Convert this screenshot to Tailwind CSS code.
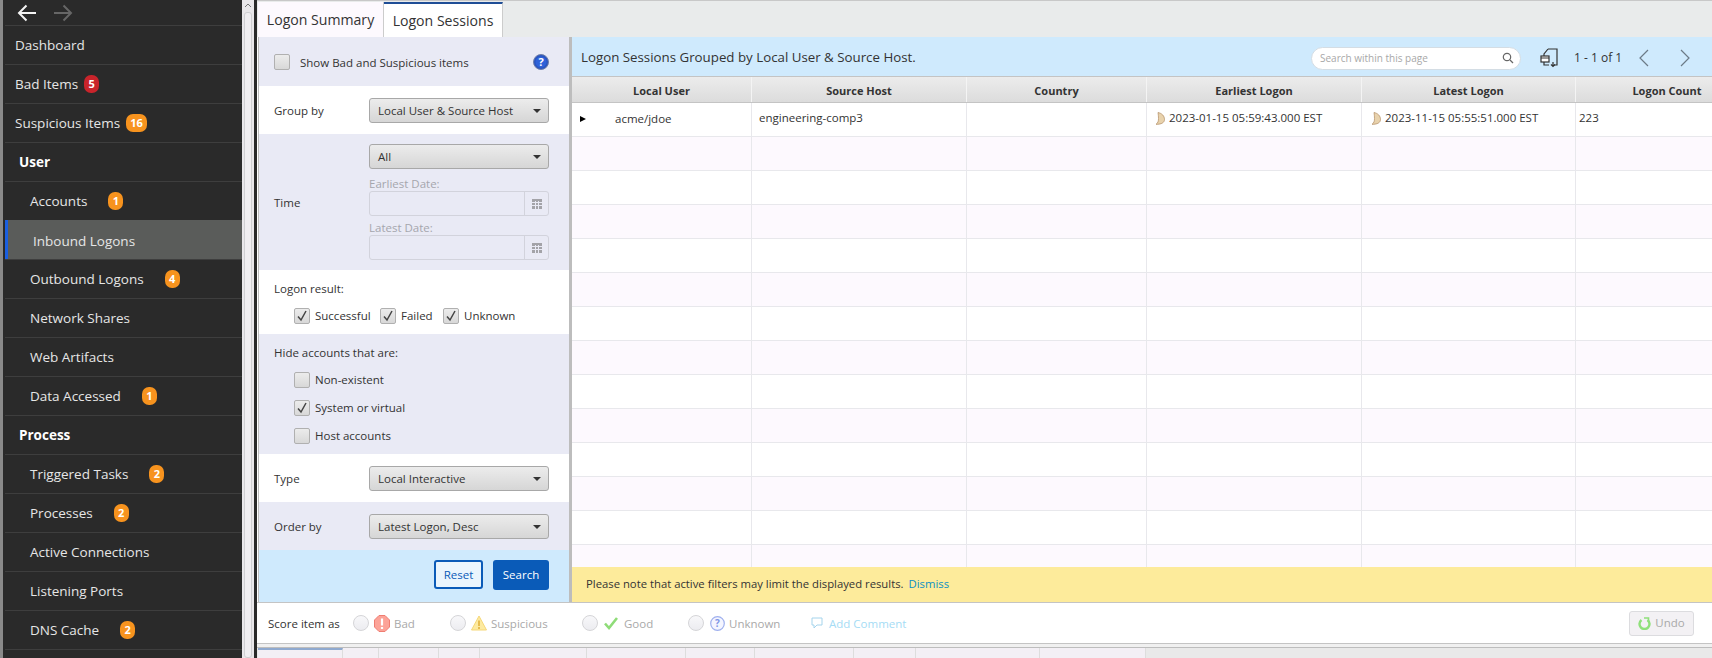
<!DOCTYPE html>
<html lang="en">
<head>
  <meta charset="UTF-8" />
  <title>Logon Sessions</title>
  <script src="https://cdn.jsdelivr.net/npm/@tailwindcss/browser@4"></script>
</head>
<body class="bg-white overflow-hidden font-['Open_Sans',sans-serif] text-[11.5px] text-[#333]">
<div class="flex h-[658px] w-[1712px] overflow-hidden">
  <!-- Sidebar -->
  <div class="w-[3px] bg-[#8a8a8a]"></div>
  <nav class="w-[239px] bg-[#2a2a2a] text-[13.5px] text-[#e6e6e6] pl-[2px]">
    <div class="h-[25px] flex items-center gap-[16px] pl-[12px]">
      <svg class="w-[20px] h-[18px]" viewBox="0 0 20 18" fill="none" stroke="#f4f4f4" stroke-width="2"><path d="M19 9H2M9.500 1.500L2 9l7.500 7.500"/></svg>
      <svg class="w-[20px] h-[18px]" viewBox="0 0 20 18" fill="none" stroke="#666" stroke-width="2"><path d="M1 9h17M10.500 1.500L18 9l-7.500 7.500"/></svg>
    </div>
    <div class="h-[39px] border-t border-[#3e3e3e] flex items-center pl-[10px]">Dashboard</div>
    <div class="h-[39px] border-t border-[#3e3e3e] flex items-center pl-[10px]">Bad Items<span class="ml-[6px] w-[15px] h-[18px] rounded-[7px] bg-[#c9242b] text-white font-bold text-[11px] flex items-center justify-center">5</span></div>
    <div class="h-[39px] border-t border-[#3e3e3e] flex items-center pl-[10px]">Suspicious Items<span class="ml-[6px] w-[21px] h-[18px] rounded-[7px] bg-[#f7931e] text-white font-bold text-[11px] flex items-center justify-center">16</span></div>
    <div class="h-[39px] border-t border-[#3e3e3e] flex items-center pl-[14px] font-bold text-white">User</div>
    <div class="h-[39px] border-t border-[#3e3e3e] flex items-center pl-[25px]">Accounts<span class="ml-[21px] w-[15px] h-[18px] rounded-[7px] bg-[#f7931e] text-white font-bold text-[11px] flex items-center justify-center">1</span></div>
    <div class="h-[39px] border-l-[3px] border-[#1a5fe0] bg-[#5a5c5a] flex items-center pt-[4px] pl-[25px]">Inbound Logons</div>
    <div class="h-[39px] border-t border-[#3e3e3e] flex items-center pl-[25px]">Outbound Logons<span class="ml-[21px] w-[15px] h-[18px] rounded-[7px] bg-[#f7931e] text-white font-bold text-[11px] flex items-center justify-center">4</span></div>
    <div class="h-[39px] border-t border-[#3e3e3e] flex items-center pl-[25px]">Network Shares</div>
    <div class="h-[39px] border-t border-[#3e3e3e] flex items-center pl-[25px]">Web Artifacts</div>
    <div class="h-[39px] border-t border-[#3e3e3e] flex items-center pl-[25px]">Data Accessed<span class="ml-[21px] w-[15px] h-[18px] rounded-[7px] bg-[#f7931e] text-white font-bold text-[11px] flex items-center justify-center">1</span></div>
    <div class="h-[39px] border-t border-[#3e3e3e] flex items-center pl-[14px] font-bold text-white">Process</div>
    <div class="h-[39px] border-t border-[#3e3e3e] flex items-center pl-[25px]">Triggered Tasks<span class="ml-[21px] w-[15px] h-[18px] rounded-[7px] bg-[#f7931e] text-white font-bold text-[11px] flex items-center justify-center">2</span></div>
    <div class="h-[39px] border-t border-[#3e3e3e] flex items-center pl-[25px]">Processes<span class="ml-[21px] w-[15px] h-[18px] rounded-[7px] bg-[#f7931e] text-white font-bold text-[11px] flex items-center justify-center">2</span></div>
    <div class="h-[39px] border-t border-[#3e3e3e] flex items-center pl-[25px]">Active Connections</div>
    <div class="h-[39px] border-t border-[#3e3e3e] flex items-center pl-[25px]">Listening Ports</div>
    <div class="h-[39px] border-t border-[#3e3e3e] flex items-center pl-[25px]">DNS Cache<span class="ml-[21px] w-[15px] h-[18px] rounded-[7px] bg-[#f7931e] text-white font-bold text-[11px] flex items-center justify-center">2</span></div>
    <div class="border-t border-[#3e3e3e]"></div>
  </nav>
  <!-- Sidebar scrollbar -->
  <div class="w-[12px] bg-[#e9e7ea] flex flex-col items-center">
    <svg class="w-[8px] h-[12px]" viewBox="0 0 8 12" fill="none" stroke="#777"><path d="M1 7l3-3 3 3"/></svg>
    <div class="flex-1 w-[8px] bg-[#f0eef1] border border-[#cfcfd2] rounded-[3px]"></div>
  </div>
  <div class="w-[3px] bg-[#2a2a2a]"></div>

  <!-- Main -->
  <div class="flex-1 min-w-0 flex flex-col">
    <!-- Tabs -->
    <div class="h-[37px] bg-[#e9ebeb] flex items-end pl-[1px] border-t border-[#c8c8c8] text-[14.100px]">
      <div class="h-[35px] w-[126px] bg-[#fdf9fe] flex items-center justify-center border-r border-[#ccc]">Logon Summary</div>
      <div class="h-[35px] w-[119px] bg-white border-t-2 border-[#1f4e96] border-r border-r-[#ccc] flex items-center justify-center">Logon Sessions</div>
    </div>

    <!-- Body: filter panel and table -->
    <div class="h-[565px] flex">
      <aside class="w-[314px] ml-[1px] border-l border-r-[3px] border-[#bdbdbd] flex flex-col">
        <div class="h-[49px] bg-[#e9eaf5] flex items-center pl-[15px] pr-[20px]">
          <span class="w-[16px] h-[16px] rounded-[2px] border border-[#b0b0b0] bg-linear-to-b from-[#ececec] to-[#d8d8d8]"></span>
          <span class="ml-[10px] flex-1 pt-[2px]">Show Bad and Suspicious items</span>
          <svg class="w-[16px] h-[16px]" viewBox="0 0 16 16"><circle cx="8" cy="8" r="7.500" fill="#2a55c0" stroke="#6f7fa8"/><circle cx="8" cy="8" r="5.500" fill="#2f62d8"/><text x="8" y="12" text-anchor="middle" font-size="11" font-weight="700" fill="#fff" font-family="Open Sans">?</text></svg>
        </div>
        <div class="h-[48px] bg-white flex items-center pl-[15px]">
          <span class="w-[95px] pt-[2px]">Group by</span>
          <div class="w-[180px] h-[25px] rounded-[3px] border border-[#a8a8a8] bg-linear-to-b from-[#ececec] to-[#d6d6d6] flex items-center justify-between pl-[8px] pr-[7px] pt-[1px]">Local User &amp; Source Host<span class="w-0 h-0 border-x-[4px] border-x-transparent border-t-[4px] border-t-[#333]"></span></div>
        </div>
        <div class="h-[136px] bg-[#e9eaf5] flex items-center pl-[15px]">
          <span class="w-[95px] pt-[2px]">Time</span>
          <div class="w-[180px] flex flex-col">
            <div class="h-[25px] rounded-[3px] border border-[#a8a8a8] bg-linear-to-b from-[#ececec] to-[#d6d6d6] flex items-center justify-between pl-[8px] pr-[7px] pt-[1px]">All<span class="w-0 h-0 border-x-[4px] border-x-transparent border-t-[4px] border-t-[#333]"></span></div>
            <div class="h-[22px] flex items-end leading-[14px] text-[#a5a6ad]">Earliest Date:</div>
            <div class="h-[25px] rounded-[3px] border border-[#d2d3dc] flex justify-end">
              <span class="w-[24px] border-l border-[#d2d3dc] flex items-center justify-center">
                <svg class="w-[10px] h-[10px]" viewBox="0 0 10 10" fill="#a3a3a8"><path d="M0 0h10v10H0z"/><path stroke="#e9eaf5" d="M0 3.500h10M0 6.500h10M3.500 2v8M6.500 2v8"/></svg>
              </span>
            </div>
            <div class="h-[19px] flex items-end leading-[14px] text-[#a5a6ad]">Latest Date:</div>
            <div class="h-[25px] rounded-[3px] border border-[#d2d3dc] flex justify-end">
              <span class="w-[24px] border-l border-[#d2d3dc] flex items-center justify-center">
                <svg class="w-[10px] h-[10px]" viewBox="0 0 10 10" fill="#a3a3a8"><path d="M0 0h10v10H0z"/><path stroke="#e9eaf5" d="M0 3.500h10M0 6.500h10M3.500 2v8M6.500 2v8"/></svg>
              </span>
            </div>
          </div>
        </div>
        <div class="h-[64px] bg-white pl-[15px] pt-[10px]">
          <div class="h-[18px] flex items-center">Logon result:</div>
          <div class="h-[16px] flex items-center mt-[10px] pl-[20px]">
            <span class="w-[16px] h-[16px] rounded-[2px] border border-[#b0b0b0] bg-linear-to-b from-[#ececec] to-[#d8d8d8] flex items-center justify-center"><svg class="w-[12px] h-[12px]" viewBox="0 0 12 12" fill="none" stroke="#444" stroke-width="1.500"><path d="M2 6.500l3 3.500 5-9"/></svg></span>
            <span class="ml-[5px] w-[65px]">Successful</span>
            <span class="w-[16px] h-[16px] rounded-[2px] border border-[#b0b0b0] bg-linear-to-b from-[#ececec] to-[#d8d8d8] flex items-center justify-center"><svg class="w-[12px] h-[12px]" viewBox="0 0 12 12" fill="none" stroke="#444" stroke-width="1.500"><path d="M2 6.500l3 3.500 5-9"/></svg></span>
            <span class="ml-[5px] w-[42px]">Failed</span>
            <span class="w-[16px] h-[16px] rounded-[2px] border border-[#b0b0b0] bg-linear-to-b from-[#ececec] to-[#d8d8d8] flex items-center justify-center"><svg class="w-[12px] h-[12px]" viewBox="0 0 12 12" fill="none" stroke="#444" stroke-width="1.500"><path d="M2 6.500l3 3.500 5-9"/></svg></span>
            <span class="ml-[5px]">Unknown</span>
          </div>
        </div>
        <div class="h-[120px] bg-[#e9eaf5] pl-[15px] pt-[10px]">
          <div class="h-[18px] flex items-center">Hide accounts that are:</div>
          <div class="h-[16px] flex items-center mt-[10px] pl-[20px]">
            <span class="w-[16px] h-[16px] rounded-[2px] border border-[#b0b0b0] bg-linear-to-b from-[#ececec] to-[#d8d8d8]"></span>
            <span class="ml-[5px]">Non-existent</span>
          </div>
          <div class="h-[16px] flex items-center mt-[12px] pl-[20px]">
            <span class="w-[16px] h-[16px] rounded-[2px] border border-[#b0b0b0] bg-linear-to-b from-[#ececec] to-[#d8d8d8] flex items-center justify-center"><svg class="w-[12px] h-[12px]" viewBox="0 0 12 12" fill="none" stroke="#444" stroke-width="1.500"><path d="M2 6.500l3 3.500 5-9"/></svg></span>
            <span class="ml-[5px]">System or virtual</span>
          </div>
          <div class="h-[16px] flex items-center mt-[12px] pl-[20px]">
            <span class="w-[16px] h-[16px] rounded-[2px] border border-[#b0b0b0] bg-linear-to-b from-[#ececec] to-[#d8d8d8]"></span>
            <span class="ml-[5px]">Host accounts</span>
          </div>
        </div>
        <div class="h-[48px] bg-white flex items-center pl-[15px]">
          <span class="w-[95px] pt-[2px]">Type</span>
          <div class="w-[180px] h-[25px] rounded-[3px] border border-[#a8a8a8] bg-linear-to-b from-[#ececec] to-[#d6d6d6] flex items-center justify-between pl-[8px] pr-[7px] pt-[1px]">Local Interactive<span class="w-0 h-0 border-x-[4px] border-x-transparent border-t-[4px] border-t-[#333]"></span></div>
        </div>
        <div class="h-[48px] bg-[#e9eaf5] flex items-center pl-[15px]">
          <span class="w-[95px] pt-[2px]">Order by</span>
          <div class="w-[180px] h-[25px] rounded-[3px] border border-[#a8a8a8] bg-linear-to-b from-[#ececec] to-[#d6d6d6] flex items-center justify-between pl-[8px] pr-[7px] pt-[1px]">Latest Logon, Desc<span class="w-0 h-0 border-x-[4px] border-x-transparent border-t-[4px] border-t-[#333]"></span></div>
        </div>
        <div class="flex-1 bg-[#cfeafd] flex justify-end items-start pt-[10px] pr-[20px] gap-[10px]">
          <button class="w-[49px] h-[29px] rounded-[3px] border-2 border-[#0a5bb8] bg-[#eaf5fd] text-[#0a5bb8]">Reset</button>
          <button class="w-[56px] h-[30px] rounded-[3px] bg-[#0a5bb8] text-white">Search</button>
        </div>
      </aside>

      <section class="flex-1 min-w-0 flex flex-col">
        <div class="h-[40px] bg-[#cfeafd] flex items-center pl-[9px] pt-[3px] text-[#333] border-b border-[#c4c4c4]">
          <span class="w-[730px] text-[13.300px]">Logon Sessions Grouped by Local User &amp; Source Host.</span>
          <div class="w-[210px] h-[23px] rounded-full bg-white border border-[#d4dde4] flex items-center justify-between pl-[8px] pr-[6px] text-[10px] text-[#a8a8a8]">Search within this page
            <svg class="w-[12px] h-[12px]" viewBox="0 0 12 12" fill="none" stroke="#666" stroke-width="1.200"><circle cx="5" cy="5" r="3.700"/><path d="M8 8l3 3"/></svg>
          </div>
          <svg class="ml-[19px] w-[19px] h-[20px]" viewBox="0 0 19 20" fill="none" stroke="#333" stroke-width="1.200"><path d="M8 1h9v16h-3M8 1L4 6v2M4 14v3h5"/><rect x="1" y="8" width="8" height="6" fill="#fff"/><path d="M1 10h8M13 14v4M11 16.500l2 2 2-2"/></svg>
          <span class="ml-[15px] w-[60px] text-[12px]">1 - 1 of 1</span>
          <svg class="w-[10px] h-[18px] ml-[5px]" viewBox="0 0 10 18" fill="none" stroke="#6c7a86" stroke-width="1.200"><path d="M9 1L1 9l8 8"/></svg>
          <svg class="w-[10px] h-[18px] ml-[31px]" viewBox="0 0 10 18" fill="none" stroke="#6c7a86" stroke-width="1.200"><path d="M1 1l8 8-8 8"/></svg>
        </div>
        <div class="h-[26px] grid grid-cols-[180px_215px_180px_215px_214px_182px] overflow-hidden font-bold text-[11px] text-[#333] border-b border-[#c4c4c4] bg-linear-to-b from-[#ececec] to-[#dcdcdc] text-center">
          <div class="border-r border-[#f4f4f4] flex items-center justify-center pt-[3px]">Local User</div>
          <div class="border-r border-[#f4f4f4] flex items-center justify-center pt-[3px]">Source Host</div>
          <div class="border-r border-[#f4f4f4] flex items-center justify-center pt-[3px]">Country</div>
          <div class="border-r border-[#f4f4f4] flex items-center justify-center pt-[3px]">Earliest Logon</div>
          <div class="border-r border-[#f4f4f4] flex items-center justify-center pt-[3px]">Latest Logon</div>
          <div class="flex items-center justify-center whitespace-nowrap pt-[3px]">Logon Count</div>
        </div>
        <div id="rows" class="flex-1 min-h-0 overflow-hidden">
          <div class="h-[34px] grid grid-cols-[180px_215px_180px_215px_214px_136px] bg-white border-b border-[#e8e8ec] text-[#333]">
            <div class="border-r border-[#e8e8ec] flex items-center pl-[8px] pb-[1px]"><span class="w-0 h-0 border-y-[3.500px] border-y-transparent border-l-[6px] border-l-black"></span><span class="ml-[29px]">acme/jdoe</span></div>
            <div class="border-r border-[#e8e8ec] flex items-center pl-[7px] pb-[3px]">engineering-comp3</div>
            <div class="border-r border-[#e8e8ec]"></div>
            <div class="border-r border-[#e8e8ec] flex items-center pl-[8px] pb-[3px]">
              <svg class="w-[10px] h-[13px] mr-[4px]" viewBox="0 0 10 13"><path d="M3 .5c4 .8 6.500 3.500 6.500 7 0 3-3 5-8.500 4.800C3 11 3.500 9 3.500 6.500 3.500 4.500 3.300 2.500 3 .5z" fill="#e8d2ac" stroke="#b08a60" stroke-width=".7"/></svg>2023-01-15 05:59:43.000 EST
            </div>
            <div class="border-r border-[#e8e8ec] flex items-center pl-[9px] pb-[3px]">
              <svg class="w-[10px] h-[13px] mr-[4px]" viewBox="0 0 10 13"><path d="M3 .5c4 .8 6.500 3.500 6.500 7 0 3-3 5-8.500 4.800C3 11 3.500 9 3.500 6.500 3.500 4.500 3.300 2.500 3 .5z" fill="#e8d2ac" stroke="#b08a60" stroke-width=".7"/></svg>2023-11-15 05:55:51.000 EST
            </div>
            <div class="flex items-center pl-[3px] pb-[3px]">223</div>
          </div>
        </div>
        <div class="h-[35px] bg-[#fdeb9b] flex items-center pl-[14px] text-[11.300px]">Please note that active filters may limit the displayed results.<span class="ml-[5px] text-[#0a8fc4]">Dismiss</span></div>
      </section>
    </div>

    <!-- Score bar -->
    <div class="h-[42px] border-t border-b border-[#c4c4c4] flex items-center pl-[11px] text-[#a9a9a9]">
      <span class="w-[85px] text-[#333] pt-[2px]">Score item as</span>
      <span class="w-[16px] h-[16px] rounded-full border border-[#d5d5d8] bg-linear-to-b from-[#f8f8fa] to-[#ececf0]"></span>
      <svg class="ml-[5px] w-[16px] h-[17px]" viewBox="0 0 16 17"><path d="M5 .5h6L15.500 5v7L11 16.500H5L.5 12V5z" fill="#fca398" stroke="#ef7d72"/><path d="M8 3.500v7M8 12v2" stroke="#fff" stroke-width="2.200"/></svg>
      <span class="ml-[4px] w-[56px] pt-[2px]">Bad</span>
      <span class="w-[16px] h-[16px] rounded-full border border-[#d5d5d8] bg-linear-to-b from-[#f8f8fa] to-[#ececf0]"></span>
      <svg class="ml-[5px] w-[16px] h-[16px]" viewBox="0 0 16 16"><path d="M8 1l7.500 14H.5z" fill="#fdeaa0" stroke="#f5d778"/><path d="M8 5.500v5.500M8 12v2" stroke="#e2b23c" stroke-width="1.600"/></svg>
      <span class="ml-[4px] w-[91px] pt-[2px]">Suspicious</span>
      <span class="w-[16px] h-[16px] rounded-full border border-[#d5d5d8] bg-linear-to-b from-[#f8f8fa] to-[#ececf0]"></span>
      <svg class="ml-[6px] w-[14px] h-[14px]" viewBox="0 0 14 14" fill="none" stroke="#8fdc78" stroke-width="2.600"><path d="M1 7.500l4 4.500 8-10"/></svg>
      <span class="ml-[6px] w-[64px] pt-[2px]">Good</span>
      <span class="w-[16px] h-[16px] rounded-full border border-[#d5d5d8] bg-linear-to-b from-[#f8f8fa] to-[#ececf0]"></span>
      <svg class="ml-[6px] w-[15px] h-[15px]" viewBox="0 0 15 15"><circle cx="7.500" cy="7.500" r="6.800" fill="#f4f5ff" stroke="#9fb0ee" stroke-width="1.200"/><text x="7.500" y="11" text-anchor="middle" font-size="10" font-weight="700" fill="#8095e6" font-family="Open Sans">?</text></svg>
      <span class="ml-[4px] w-[82px] pt-[2px]">Unknown</span>
      <svg class="w-[12px] h-[13px]" viewBox="0 0 12 13" fill="none" stroke="#a5d4ec"><path d="M1 1h10v7H6l-3 3V8H1z"/></svg>
      <span class="ml-[6px] flex-1 text-[#a5dcf5] pt-[2px]">Add Comment</span>
      <button class="w-[65px] h-[25px] mr-[18px] rounded-[3px] border border-[#dcdcdf] bg-[#f3f1f4] flex items-center justify-center gap-[4px]">
        <svg class="w-[13px] h-[14px]" viewBox="0 0 13 14" fill="none" stroke="#8fe07a" stroke-width="2.400"><path d="M3.500 4a5 5 0 1 0 6 0"/><path d="M6 2h4.500v4" stroke-width="1.600"/></svg>Undo
      </button>
    </div>

    <!-- Bottom tabs -->
    <div class="h-[4px] bg-[#f0f0f0] border-b border-[#bdbdbd]"></div>
    <div class="flex-1 flex bg-[#e9e9e9] pl-[1px]">
      <div class="w-[85px] bg-[#f3eff5] border-t-2 border-[#8fa9cf] border-r border-r-[#ddd]"></div>
      <div class="w-[36px] bg-[#f3eff5] border-r border-[#ddd]"></div>
      <div class="w-[60px] bg-[#f3eff5] border-r border-[#ddd]"></div>
      <div class="w-[41px] bg-[#f3eff5] border-r border-[#ddd]"></div>
      <div class="w-[107px] bg-[#f3eff5] border-r border-[#ddd]"></div>
      <div class="w-[99px] bg-[#f3eff5] border-r border-[#ddd]"></div>
      <div class="w-[69px] bg-[#f3eff5] border-r border-[#ddd]"></div>
      <div class="w-[99px] bg-[#f3eff5] border-r border-[#ddd]"></div>
      <div class="w-[62px] bg-[#f3eff5] border-r border-[#ddd]"></div>
      <div class="w-[124px] bg-[#f3eff5] border-r border-[#ddd]"></div>
      <div class="w-[106px] bg-[#f3eff5] border-r border-[#ddd]"></div>
    </div>
  </div>
</div>
<script>
  // Empty table rows
  const rows = document.getElementById('rows');
  for (let i = 1; i < 14; i++) {
    const bg = i % 2 ? 'bg-[#fdf9fe]' : 'bg-white';
    const cell = '<div class="border-r border-[#e8e8ec]"></div>';
    rows.insertAdjacentHTML('beforeend',
      `<div class="h-[34px] grid grid-cols-[180px_215px_180px_215px_214px_136px] border-b border-[#e8e8ec] ${bg}">${cell.repeat(5)}<div></div></div>`);
  }
</script>
</body>
</html>
